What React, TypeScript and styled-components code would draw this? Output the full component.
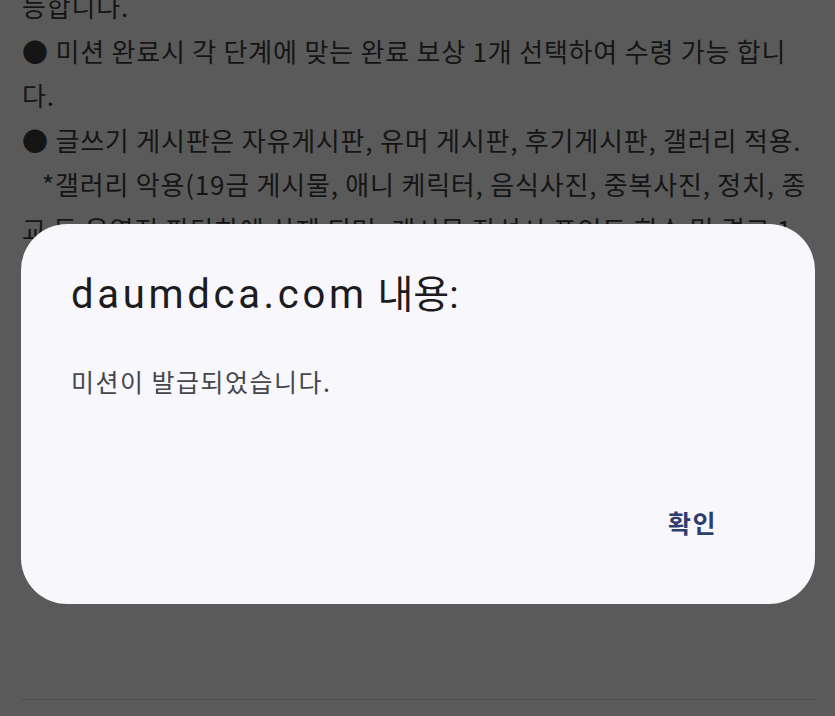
import React from 'react';
import styled, { createGlobalStyle } from 'styled-components';

const GlobalStyle = createGlobalStyle`
  html, body {
    margin: 0;
    padding: 0;
    background: #5a5a5a;
  }
  * {
    box-sizing: border-box;
  }
`;

const Page = styled.div`
  position: relative;
  width: 835px;
  height: 716px;
  overflow: hidden;
  display: flex;
  flex-direction: column;
  background: #5a5a5a;
  padding: 0 20px 16px 22px;
`;

// dimmed page text behind the alert (first line is scrolled partly out of view)
const Article = styled.div`
  flex: 1;
  margin-top: -16px;
  font-family: 'Noto Sans CJK KR', 'Noto Sans', sans-serif;
  font-size: 26px;
  letter-spacing: 0.8px;
  line-height: 44.6px;
  color: #151515;
`;

const Line = styled.div<{ $indent?: number }>`
  white-space: nowrap;
  padding-left: ${(p) => p.$indent ?? 0}px;
`;

const Divider = styled.div`
  height: 1px;
  margin-left: -1px;
  background: #4f4f4f;
`;

const Dialog = styled.div`
  position: absolute;
  left: 21px;
  top: 224px;
  width: 794px;
  height: 380px;
  border-radius: 46px;
  background: #f7f7fc;
  display: flex;
  flex-direction: column;
  padding: 46px 99px 0 50px;
`;

const Title = styled.div`
  font-family: Roboto, 'Noto Sans CJK KR', sans-serif;
  font-size: 39px;
  line-height: 50px;
  color: #1c1c20;
  white-space: nowrap;
`;

const Domain = styled.span`
  font-size: 40px;
  letter-spacing: 3.7px;
`;

const Message = styled.div`
  margin-top: 44px;
  font-family: 'Noto Sans CJK KR', 'Noto Sans', sans-serif;
  font-size: 25px;
  letter-spacing: 1.5px;
  line-height: 34px;
  color: #46474c;
`;

const Actions = styled.div`
  margin-top: 107px;
  display: flex;
  justify-content: flex-end;
`;

const Button = styled.button`
  border: none;
  background: none;
  padding: 0;
  margin-right: -1px;
  font-family: 'Noto Sans CJK KR', 'Noto Sans', sans-serif;
  font-size: 25px;
  font-weight: 700;
  letter-spacing: 1.5px;
  line-height: 34px;
  color: #2d3e6c;
`;

export default function App() {
  return (
    <>
      <GlobalStyle />
      <Page>
        <Article>
          <Line>능합니다.</Line>
          <Line>● 미션 완료시 각 단계에 맞는 완료 보상 1개 선택하여 수령 가능 합니</Line>
          <Line>다.</Line>
          <Line>● 글쓰기 게시판은 자유게시판, 유머 게시판, 후기게시판, 갤러리 적용.</Line>
          <Line $indent={20}>*갤러리 악용(19금 게시물, 애니 케릭터, 음식사진, 중복사진, 정치, 종</Line>
          <Line>교 등 운영진 판단하에 삭제 되며, 게시물 작성시 포인트 회수 및 경고 1</Line>
        </Article>
        <Divider />
        <Dialog>
          <Title>
            <Domain>daumdca.com</Domain> 내용:
          </Title>
          <Message>미션이 발급되었습니다.</Message>
          <Actions>
            <Button>확인</Button>
          </Actions>
        </Dialog>
      </Page>
    </>
  );
}
